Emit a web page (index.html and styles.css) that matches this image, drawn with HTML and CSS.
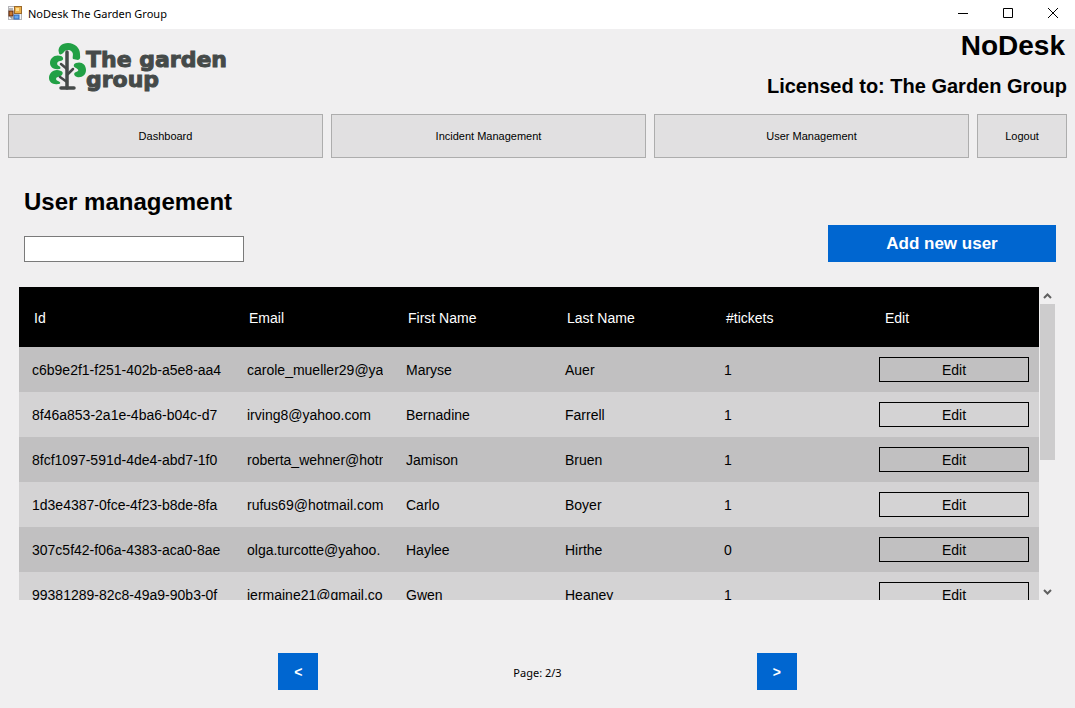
FILE: index.html
```
<!DOCTYPE html>
<html lang="en">
<head>
<meta charset="utf-8">
<title>NoDesk The Garden Group</title>
<link rel="stylesheet" href="styles.css">
</head>
<body>
<div class="titlebar">
  <svg class="app-icon" width="14" height="14" viewBox="0 0 14 14" aria-hidden="true">
    <rect x="0.500" y="0.500" width="13" height="13" fill="#f4f4f6" stroke="#b4b4b8"/>
    <rect x="6.500" y="0.500" width="7" height="7" fill="#edb04a" stroke="#9a6a2c"/>
    <rect x="8" y="2" width="3" height="3" fill="#ffdf91"/>
    <rect x="1" y="5" width="4" height="5" fill="#c9782e" stroke="#59250f"/>
    <rect x="6" y="9" width="5" height="4" fill="#67a7ed" stroke="#2c66b8"/>
    <path d="M1 3h4M3 10v2h3" stroke="#777" fill="none"/>
  </svg>
  <span class="titlebar-text">NoDesk The Garden Group</span>
  <div class="window-controls">
    <button type="button" aria-label="Minimize"><svg width="12" height="12" viewBox="0 0 12 12"><path d="M1 6.500h10"/></svg></button>
    <button type="button" aria-label="Maximize"><svg width="12" height="12" viewBox="0 0 12 12"><path d="M1.500 1.500h9v9h-9z"/></svg></button>
    <button type="button" aria-label="Close"><svg width="12" height="12" viewBox="0 0 12 12"><path d="M1 1l10 10M11 1L1 11"/></svg></button>
  </div>
</div>

<header class="header">
  <div class="logo">
    <svg width="38" height="50" viewBox="0 0 38 50" aria-hidden="true">
      <g fill="#22a045">
        <path d="M10 11C8 5 13 1 19 1c7 0 12 5 12 11 0 3 1 5-2 6l-5-1c-1-2 1-5-1-7-2-3-7-2-8 0-2 3-5 3-5 1z"/>
        <path d="M12 14C6 12 1 16 1 21c0 4 4 7 9 6 2 0 2-2 0-3-3-1-2-5 1-5 4 0 4-4 1-5z"/>
        <path d="M12 29C5 26 0 31 0 36c0 4 4 7 9 6 3 0 3-2 0-3-3-1-2-4 0-4 5-1 6-5 3-6z"/>
        <path d="M27 21c5-2 10 1 10 7 0 5-4 8-9 7-3-1-4-4-1-5 4-1 2-3 0-4-3-1-3-4 0-5z"/>
      </g>
      <g fill="none" stroke="#454a49" stroke-linecap="round">
        <path d="M18 10v36" stroke-width="3.500"/>
        <path d="M12 22l6 5M24 27l-5 5M11 35l7 5" stroke-width="2.500"/>
        <path d="M12 46h13" stroke-width="3.500"/>
      </g>
    </svg>
    <div class="logo-text">The garden<br>group</div>
  </div>
  <div class="license">
    <div class="product">NoDesk</div>
    <div class="licensee">Licensed to: The Garden Group</div>
  </div>
</header>

<nav class="nav">
  <button type="button">Dashboard</button>
  <button type="button">Incident Management</button>
  <button type="button">User Management</button>
  <button type="button">Logout</button>
</nav>

<main class="main">
  <div class="toolbar">
    <div class="search">
      <h1><label for="filter">User management</label></h1>
      <input id="filter" type="text">
    </div>
    <button type="button" class="primary add">Add new user</button>
  </div>

  <div class="list">
    <div class="list-view">
      <table>
        <colgroup><col class="col-id"><col><col><col><col><col class="col-edit"></colgroup>
        <thead>
          <tr><th>Id</th><th>Email</th><th>First Name</th><th>Last Name</th><th>#tickets</th><th>Edit</th></tr>
        </thead>
        <tbody>
          <tr><td><div class="clip">c6b9e2f1-f251-402b-a5e8-aa4</div></td><td><div class="clip">carole_mueller29@ya</div></td><td>Maryse</td><td>Auer</td><td>1</td><td><button type="button">Edit</button></td></tr>
          <tr><td><div class="clip">8f46a853-2a1e-4ba6-b04c-d7</div></td><td><div class="clip">irving8@yahoo.com</div></td><td>Bernadine</td><td>Farrell</td><td>1</td><td><button type="button">Edit</button></td></tr>
          <tr><td><div class="clip">8fcf1097-591d-4de4-abd7-1f0</div></td><td><div class="clip">roberta_wehner@hotm</div></td><td>Jamison</td><td>Bruen</td><td>1</td><td><button type="button">Edit</button></td></tr>
          <tr><td><div class="clip">1d3e4387-0fce-4f23-b8de-8fa</div></td><td><div class="clip">rufus69@hotmail.com</div></td><td>Carlo</td><td>Boyer</td><td>1</td><td><button type="button">Edit</button></td></tr>
          <tr><td><div class="clip">307c5f42-f06a-4383-aca0-8ae</div></td><td><div class="clip">olga.turcotte@yahoo.</div></td><td>Haylee</td><td>Hirthe</td><td>0</td><td><button type="button">Edit</button></td></tr>
          <tr><td><div class="clip">99381289-82c8-49a9-90b3-0f</div></td><td><div class="clip">jermaine21@gmail.co</div></td><td>Gwen</td><td>Heaney</td><td>1</td><td><button type="button">Edit</button></td></tr>
        </tbody>
      </table>
    </div>
    <div class="scrollbar">
      <button type="button" aria-label="Scroll up"><svg width="9" height="6" viewBox="0 0 9 6"><path d="M1 5l3.500-3.500L8 5"/></svg></button>
      <div class="track"><div class="thumb"></div></div>
      <button type="button" aria-label="Scroll down"><svg width="9" height="6" viewBox="0 0 9 6"><path d="M1 1l3.500 3.500L8 1"/></svg></button>
    </div>
  </div>

  <div class="pager">
    <button type="button" class="primary" aria-label="Previous page">&lt;</button>
    <span>Page: 2/3</span>
    <button type="button" class="primary" aria-label="Next page">&gt;</button>
  </div>
</main>
</body>
</html>
```
FILE: styles.css
```
* { box-sizing: border-box; }

body {
  margin: 0;
  height: 100vh;
  display: flex;
  flex-direction: column;
  background: #f0eff0;
  color: #000;
  font: 14px/20px "Liberation Sans", Arial, sans-serif;
}

button { font: inherit; color: inherit; border-radius: 0; padding: 0; }

.titlebar {
  display: flex;
  align-items: flex-start;
  height: 29px;
  padding-left: 8px;
  background: #fff;
  flex: none;
}
.app-icon { margin: 6px 6px 0 0; }
.titlebar-text { flex: 1; font: 11px/27px "Noto Sans", sans-serif; }
.window-controls { display: flex; }
.window-controls button {
  width: 45px;
  height: 26px;
  border: 0;
  background: none;
  display: grid;
  place-items: center;
}
.window-controls path { fill: none; stroke: #000; stroke-width: 1; }

.header {
  display: flex;
  justify-content: space-between;
  align-items: flex-start;
  flex: none;
  height: 85px;
  padding: 0 8px 0 49px;
}
.logo { display: flex; padding-top: 13px; }
.logo-text {
  padding-top: 8px;
  margin-left: -1px;
  font: bold 22px/20px "DejaVu Sans", sans-serif;
  color: #454a49;
  -webkit-text-stroke: 1px #454a49;
}
.license { text-align: right; font-weight: bold; }
.product { font-size: 28px; line-height: 34px; padding-right: 2px; }
.licensee { font-size: 20px; line-height: 24px; padding-top: 11px; }

.nav {
  display: grid;
  grid-template-columns: 1fr 1fr 1fr 90px;
  gap: 8px;
  padding: 0 8px;
  flex: none;
}
.nav button {
  height: 44px;
  border: 1px solid #adadad;
  background: #e1e0e1;
  font-size: 11px;
}

.main {
  flex: 1;
  min-height: 0;
  display: flex;
  flex-direction: column;
  padding: 28px 19px 18px;
}
.toolbar { display: flex; justify-content: space-between; align-items: flex-end; }
.search { padding-left: 5px; }
.search h1 { margin: 0 0 18px; font-size: 24px; line-height: 32px; }
.search input {
  display: block;
  width: 220px;
  height: 26px;
  border: 1px solid #7a7a7a;
  background: #fff;
  padding: 2px 4px;
  font: inherit;
}

.primary {
  border: 0;
  background: #0066d0;
  color: #fff;
  height: 37px;
  width: 40px;
  font-weight: bold;
}
.add { width: 228px; font-size: 17px; }

.list { flex: 1; min-height: 0; margin: 25px 1px 0 0; display: flex; }
.list-view { flex: 1; overflow: hidden; }
table { width: 100%; table-layout: fixed; border-collapse: collapse; }
.col-id { width: 220px; }
.col-edit { width: 164px; }
th {
  height: 60px;
  padding: 2px 8px 0 10px;
  background: #000;
  color: #fff;
  font-weight: normal;
  text-align: left;
}
th:first-child { padding-left: 15px; }
td {
  height: 45px;
  padding: 0 15px 0 8px;
  white-space: nowrap;
}
td:first-child { padding-left: 13px; }
td:last-child { padding: 0 10px 0 4px; }
.clip { overflow: hidden; }
tbody tr:nth-child(odd) { background: #c1c0c1; }
tbody tr:nth-child(even) { background: #d4d3d4; }
td button {
  display: block;
  width: 100%;
  height: 25px;
  border: 1px solid #000;
  background: none;
}

.scrollbar { width: 16px; padding-left: 1px; display: flex; flex-direction: column; }
.scrollbar button { height: 17px; border: 0; background: none; display: grid; place-items: center; }
.scrollbar path { fill: none; stroke: #606060; stroke-width: 2; }
.track { flex: 1; }
.thumb { height: 56%; background: #cdcccd; }

.pager {
  display: flex;
  justify-content: space-between;
  align-items: center;
  align-self: center;
  width: 50%;
  margin-top: 53px;
}
.pager span { padding-top: 2px; font: 11px/20px "Noto Sans", sans-serif; }
```
